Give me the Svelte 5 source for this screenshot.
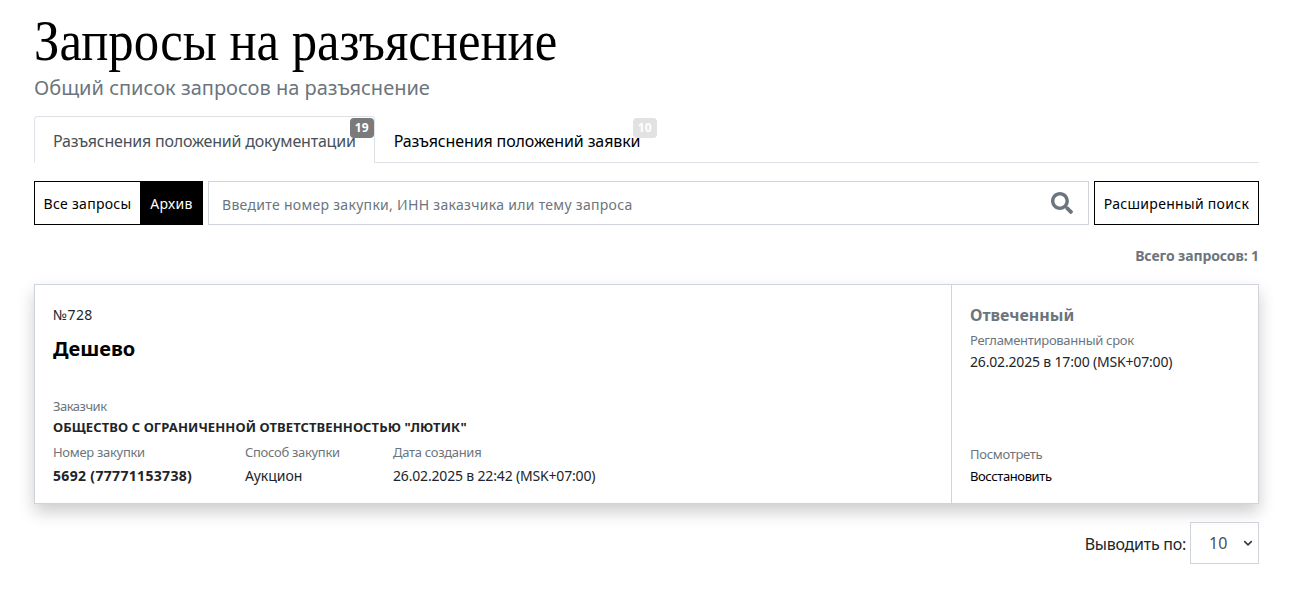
<script>
  const meta = [
    { label: 'Номер закупки', value: '5692 (77771153738)', strong: true, width: 192 },
    { label: 'Способ закупки', value: 'Аукцион', width: 148 },
    { label: 'Дата создания', value: '26.02.2025 в 22:42 (MSK+07:00)', width: 0 }
  ];
</script>

<div class="page">
  <h1>Запросы на разъяснение</h1>
  <p class="subtitle">Общий список запросов на разъяснение</p>

  <nav class="tabs">
    <a class="tab active">Разъяснения положений документации<span class="badge dark">19</span></a>
    <a class="tab">Разъяснения положений заявки<span class="badge light">10</span></a>
  </nav>

  <div class="toolbar">
    <div class="switch">
      <button class="sw">Все запросы</button>
      <button class="sw on">Архив</button>
    </div>
    <div class="search">
      <span class="ph">Введите номер закупки, ИНН заказчика или тему запроса</span>
      <svg viewBox="0 0 512 512" width="22" height="22" aria-hidden="true"><path fill="#6c757d" d="M505 442.7L405.3 343c-4.5-4.5-10.6-7-17-7H372c27.6-35.3 44-79.700 44-128C416 93.100 322.900 0 208 0S0 93.100 0 208s93.100 208 208 208c48.300 0 92.700-16.400 128-44v16.300c0 6.400 2.500 12.500 7 17l99.700 99.700c9.400 9.400 24.600 9.400 33.900 0l28.300-28.300c9.400-9.400 9.400-24.600.1-34zM208 336c-70.700 0-128-57.200-128-128 0-70.700 57.200-128 128-128 70.700 0 128 57.200 128 128 0 70.700-57.200 128-128 128z"/></svg>
    </div>
    <button class="adv">Расширенный поиск</button>
  </div>

  <div class="total">Всего запросов: 1</div>

  <article class="card">
    <div class="main">
      <div class="num">№728</div>
      <h2>Дешево</h2>
      <div class="lbl customer">Заказчик</div>
      <div class="org">ОБЩЕСТВО С ОГРАНИЧЕННОЙ ОТВЕТСТВЕННОСТЬЮ "ЛЮТИК"</div>
      <div class="meta">
        {#each meta as m}
          <div class="col" style={m.width ? `width:${m.width}px` : ''}>
            <div class="lbl">{m.label}</div>
            <div class="val" class:strong={m.strong}>{m.value}</div>
          </div>
        {/each}
      </div>
    </div>
    <aside class="side">
      <div>
        <div class="status">Отвеченный</div>
        <div class="lbl rule">Регламентированный срок</div>
        <div class="val deadline">26.02.2025 в 17:00 (MSK+07:00)</div>
      </div>
      <div>
        <div class="lbl view">Посмотреть</div>
        <div class="restore">Восстановить</div>
      </div>
    </aside>
  </article>

  <div class="pager">
    <span>Выводить по:</span>
    <div class="select">10
      <svg viewBox="0 0 16 16" width="10" height="10" aria-hidden="true"><path d="M2 5l6 6 6-6" fill="none" stroke="#343a40" stroke-width="2.600"/></svg>
    </div>
  </div>
</div>

<style>
  :global(body) { margin: 0; background: #fff; }
  .page {
    padding: 0 42px 0 34px;
    font-family: "Noto Sans", sans-serif;
    color: #212529;
    font-size: 14px;
  }
  h1 {
    margin: 0;
    padding-top: 11px;
    font: 400 56px/60px "Liberation Serif", serif;
    color: #000;
    transform: scaleX(.905);
    transform-origin: left center;
    white-space: nowrap;
  }
  .subtitle {
    margin: 3px 0 0;
    font-size: 20px;
    line-height: 27px;
    color: #6c757d;
  }
  .tabs {
    display: flex;
    margin-top: 15px;
    height: 46px;
    border-bottom: 1px solid #dee2e6;
    box-sizing: content-box;
  }
  .tab {
    position: relative;
    box-sizing: border-box;
    height: 47px;
    padding: 13px 18px 0;
    font-size: 16px;
    line-height: 22px;
    letter-spacing: -.12px;
    color: #000;
    border: 1px solid transparent;
  }
  .tab.active {
    color: #495057;
    background: #fff;
    letter-spacing: -.2px;
    border-color: #dee2e6 #dee2e6 #fff;
    border-radius: 4px 4px 0 0;
  }
  .badge {
    position: absolute;
    top: 1px;
    right: 0;
    width: 24px;
    height: 20px;
    border-radius: 4px;
    color: #fff;
    font-size: 12px;
    font-weight: 700;
    line-height: 20px;
    text-align: center;
    letter-spacing: 0;
  }
  .badge.dark { background: #7a7a7a; }
  .badge.light { background: #e2e2e2; right: auto; left: 257px; }
  .toolbar {
    display: flex;
    gap: 5px;
    margin-top: 18px;
    height: 44px;
    letter-spacing: .3px;
  }
  .switch {
    display: flex;
    border: 1px solid #000;
    box-sizing: border-box;
    width: 169px;
  }
  button {
    font: inherit;
    letter-spacing: inherit;
    border: 0;
    background: #fff;
    color: #000;
    padding: 0;
  }
  .sw { width: 106px; border-right: 1px solid #000; }
  .sw.on { flex: 1; background: #000; color: #fff; border: 0; }
  .search {
    flex: 1;
    display: flex;
    align-items: center;
    justify-content: space-between;
    padding: 0 15px 0 13px;
    border: 1px solid #ced4da;
    box-sizing: border-box;
  }
  .ph { color: #6c757d; padding-top: 2px; }
  .adv {
    width: 165px;
    border: 1px solid #000;
    box-sizing: border-box;
  }
  .total {
    margin-top: 21px;
    text-align: right;
    font-weight: 700;
    line-height: 20px;
    letter-spacing: -.1px;
    color: #6c757d;
  }
  .card {
    display: flex;
    margin-top: 18px;
    height: 220px;
    box-sizing: border-box;
    border: 1px solid #ced4da;
    box-shadow: 0 8px 16px rgba(0, 0, 0, .2);
    background: #fff;
  }
  .main {
    flex: 1;
    padding: 20px 18px 0;
    border-right: 1px solid #ced4da;
  }
  .num { line-height: 20px; color: #212529; letter-spacing: .3px; }
  h2 {
    margin: 10px 0 0;
    font-size: 20px;
    line-height: 27px;
    font-weight: 700;
    color: #000;
  }
  .lbl { font-size: 13px; line-height: 18px; color: #6c757d; letter-spacing: -.3px; }
  .customer { margin-top: 35px; letter-spacing: -.5px; }
  .org {
    margin-top: 3px;
    font-size: 13px;
    font-weight: 700;
    line-height: 18px;
    letter-spacing: .1px;
  }
  .meta { display: flex; margin-top: 7px; }
  .val { margin-top: 5px; line-height: 20px; letter-spacing: -.17px; }
  .strong { font-weight: 700; letter-spacing: .33px; }
  .col:nth-child(2) .val { letter-spacing: 0; }
  .side {
    width: 306px;
    box-sizing: border-box;
    padding: 19px 18px 18px;
    display: flex;
    flex-direction: column;
    justify-content: space-between;
  }
  .status {
    font-size: 16px;
    font-weight: 700;
    line-height: 22px;
    color: #6c757d;
  }
  .rule { margin-top: 5px; }
  .deadline { margin-top: 3px; }
  .restore { margin-top: 4px; font-size: 13px; line-height: 18px; color: #000; letter-spacing: -.4px; }
  .pager {
    display: flex;
    justify-content: flex-end;
    align-items: center;
    gap: 4px;
    margin-top: 18px;
    font-size: 16px;
    letter-spacing: -.25px;
  }
  .pager span { padding-top: 2px; }
  .select {
    display: flex;
    align-items: center;
    justify-content: space-between;
    width: 69px;
    height: 42px;
    box-sizing: border-box;
    padding: 0 5px 0 18px;
    border: 1px solid #ced4da;
    color: #495057;
    letter-spacing: 0;
  }
</style>
